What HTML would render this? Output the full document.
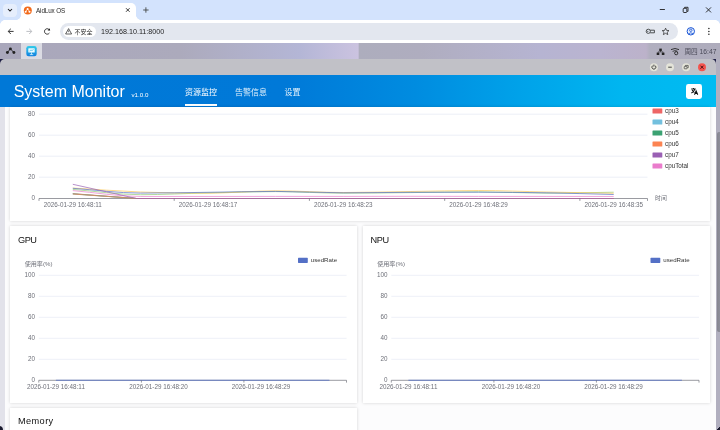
<!DOCTYPE html>
<html><head><meta charset="utf-8"><title>AidLux OS</title>
<style>
*{margin:0;padding:0;box-sizing:border-box}
html,body{width:720px;height:430px;overflow:hidden;background:#fff;font-family:"Liberation Sans","Noto Sans CJK SC",sans-serif;}
#root{will-change:transform;position:relative;width:720px;height:430px;overflow:hidden;background:#fcfcfd}
.abs{position:absolute}
#tabs{left:0;top:0;width:720px;height:20px;background:#d3e3fd}
#tab{left:20.6px;top:2.8px;width:115.4px;height:17.2px;background:#fff;border-radius:5px 5px 0 0}
#toolbar{left:0;top:20px;width:720px;height:23px;background:#fff}
#url{left:60.4px;top:22.8px;width:618px;height:16.8px;border-radius:8.4px;background:#e3e7ef}
#chip{left:62.5px;top:25.6px;width:33.3px;height:11.8px;border-radius:6px;background:#fff}
#task{left:0;top:43px;width:720px;height:16.3px;background:linear-gradient(90deg,#a9a7bb 0px,#acaabc 180px,#b4b6d6 300px,#cbc3e0 358px,#adadbd 359.5px,#afadbf 420px,#b6b4d2 540px,#bab4d0 600px,#bcb2ca 646px,#b1afbf 650px,#aeacbc 720px)}
#wintitle{left:0;top:59px;width:716px;height:16px;background:#c1c1c7;border-radius:5px 5px 0 0}
#hdr{left:0;top:75px;width:716px;height:32px;background:linear-gradient(90deg,#0078d7 0%,#0079d8 40%,#008ce0 58%,#00a4ea 74%,#00b6f0 87%,#00bcf2 100%)}
.card{background:#fff;box-shadow:0 0 3px rgba(0,0,0,.17)}
.t{position:absolute;white-space:nowrap;line-height:1}
svg text.ax{font-family:"Liberation Sans","Noto Sans CJK SC",sans-serif;font-size:6.3px;fill:#6e7079}
svg text.lg{font-family:"Liberation Sans","Noto Sans CJK SC",sans-serif;font-size:6.3px;fill:#333}
</style></head><body><div id="root">

<!-- browser chrome -->
<div id="tabs" class="abs"></div>
<div class="abs" style="left:3px;top:3.5px;width:13.7px;height:13.2px;border-radius:4px;background:#e6eefc"></div>
<div id="tab" class="abs"></div>
<div class="abs" style="left:15.6px;top:15px;width:5px;height:5px;background:radial-gradient(circle at 0 0,#d3e3fd 4.6px,#fff 5.2px)"></div>
<div class="abs" style="left:136px;top:15px;width:5px;height:5px;background:radial-gradient(circle at 100% 0,#d3e3fd 4.6px,#fff 5.2px)"></div>
<div class="t" style="left:36px;top:7.7px;font-size:6.3px;letter-spacing:-0.1px;color:#1f1f1f">AidLux OS</div>
<div id="toolbar" class="abs"></div>
<div class="abs" style="left:0;top:20px;width:5px;height:5px;background:radial-gradient(circle at 100% 100%,#fff 4.6px,#d3e3fd 5.2px)"></div>
<div class="abs" style="left:715px;top:20px;width:5px;height:5px;background:radial-gradient(circle at 0 100%,#fff 4.6px,#d3e3fd 5.2px)"></div>
<div id="url" class="abs"></div>
<div id="chip" class="abs"></div>
<div class="t" style="left:74.6px;top:28.9px;font-size:6px;color:#1f1f1f">不安全</div>
<div class="t" style="left:101px;top:28.5px;font-size:7.18px;color:#1f1f1f">192.168.10.11:8000</div>

<svg class="abs" style="left:0;top:0" width="720" height="60" viewBox="0 0 720 60">
 <!-- tab search chevron -->
 <path d="M8 9 L10 11 L12 9" fill="none" stroke="#1f1f1f" stroke-width="1.05"/>
 <!-- favicon -->
 <circle cx="27.8" cy="10.4" r="4" fill="#f26a1b"/>
 <circle cx="27.6" cy="8.9" r="1" fill="#fff"/><circle cx="25.7" cy="11.7" r="1" fill="#fff"/><circle cx="29.5" cy="11.7" r="1" fill="#fff"/>
 <path d="M27.6 8.9 L25.7 11.7 M27.6 8.9 L29.5 11.7" stroke="#fff" stroke-width="0.6"/>
 <!-- tab close -->
 <path d="M126 8.2 L129.6 11.8 M129.6 8.2 L126 11.8" stroke="#1f1f1f" stroke-width="0.85"/>
 <!-- plus -->
 <path d="M143.2 10 H148.6 M145.9 7.3 V12.7" stroke="#444746" stroke-width="0.9"/>
 <!-- window controls -->
 <path d="M659.8 9.5 H664.9" stroke="#1f1f1f" stroke-width="0.9"/>
 <rect x="683.2" y="8.3" width="3.6" height="4.2" rx="0.8" fill="none" stroke="#1f1f1f" stroke-width="0.9"/>
 <path d="M684.6 8 V7.3 H688 V11.4 H687.2" fill="none" stroke="#1f1f1f" stroke-width="0.9"/>
 <path d="M706 7.4 L711 12.4 M711 7.4 L706 12.4" stroke="#1f1f1f" stroke-width="0.9"/>
 <!-- nav arrows -->
 <path d="M13.6 31.4 H8.4 M10.8 28.8 L8.2 31.4 L10.8 34" fill="none" stroke="#1f1f1f" stroke-width="0.9"/>
 <path d="M26.4 31.4 H31.6 M29.2 28.8 L31.8 31.4 L29.2 34" fill="none" stroke="#b4b7bb" stroke-width="0.9"/>
 <path d="M49.6 30.2 A2.7 2.7 0 1 0 49.4 33" fill="none" stroke="#1f1f1f" stroke-width="0.9"/>
 <path d="M50 28.2 V30.6 H47.6 Z" fill="#1f1f1f"/>
 <!-- warning -->
 <path d="M68.6 28.6 L71.6 34 H65.6 Z" fill="none" stroke="#1f1f1f" stroke-width="0.7" stroke-linejoin="round"/>
 <path d="M68.6 30.4 V32.2" stroke="#1f1f1f" stroke-width="0.6"/>
 <!-- key -->
 <circle cx="648.3" cy="31.3" r="2.1" fill="none" stroke="#3c3f41" stroke-width="0.9"/>
 <circle cx="647.8" cy="31.3" r="0.6" fill="#3c3f41"/>
 <path d="M650.2 30.2 H654.4 V32.8 H650.2" fill="none" stroke="#3c3f41" stroke-width="0.9"/>
 <!-- star -->
 <path d="M665.6 28.2 L666.6 30.4 L669 30.6 L667.2 32.2 L667.8 34.6 L665.6 33.3 L663.4 34.6 L664 32.2 L662.2 30.6 L664.6 30.4 Z" fill="none" stroke="#1f1f1f" stroke-width="0.7" stroke-linejoin="round"/>
 <!-- profile -->
 <circle cx="690.8" cy="31.3" r="3.7" fill="#e8f0fe" stroke="#1a56d6" stroke-width="1"/>
 <circle cx="690.8" cy="30.3" r="1.2" fill="none" stroke="#1a56d6" stroke-width="0.8"/>
 <path d="M688.4 33.9 Q690.8 31.6 693.2 33.9" fill="none" stroke="#1a56d6" stroke-width="0.8"/>
 <!-- menu dots -->
 <circle cx="708.9" cy="28.6" r="0.75" fill="#1f1f1f"/><circle cx="708.9" cy="31.4" r="0.75" fill="#1f1f1f"/><circle cx="708.9" cy="34.2" r="0.75" fill="#1f1f1f"/>
</svg>

<!-- desktop taskbar -->
<div id="task" class="abs"></div>
<div class="abs" style="left:20.8px;top:43px;width:21.1px;height:16.2px;background:#dbdbe3"></div>
<svg class="abs" style="left:0;top:43px" width="720" height="17" viewBox="0 43 720 17">
 <circle cx="10.4" cy="48.9" r="1.45" fill="#222"/><circle cx="7.4" cy="52.5" r="1.45" fill="#222"/><circle cx="13.9" cy="52.5" r="1.45" fill="#222"/>
 <path d="M10.4 48.9 L7.4 52.5 M10.4 48.9 L13.9 52.5" stroke="#222" stroke-width="0.9"/>
 <defs><linearGradient id="ig" x1="0" y1="0" x2="0" y2="1"><stop offset="0" stop-color="#34cdea"/><stop offset="1" stop-color="#0f7fe0"/></linearGradient></defs>
 <rect x="26.3" y="45.9" width="10.4" height="10.4" rx="2.4" fill="url(#ig)"/>
 <rect x="28.3" y="48.2" width="6.4" height="4.2" rx="0.5" fill="#e8fbff"/>
 <path d="M29.6 51 L31 50 L32 50.6 L33.6 49.4" fill="none" stroke="#22a8e4" stroke-width="0.6"/>
 <path d="M29.8 54.6 H33.2 M31.5 52.4 V54.6" stroke="#e8fbff" stroke-width="0.7"/>
 <!-- network -->
 <rect x="659.3" y="48.6" width="2.5" height="2.4" fill="#222"/><rect x="656.7" y="52.6" width="2.6" height="2.4" fill="#222"/><rect x="661.8" y="52.6" width="2.6" height="2.4" fill="#222"/>
 <path d="M660.5 51 V52 M658 52.6 V51.9 H663.1 V52.6" fill="none" stroke="#222" stroke-width="0.6"/>
 <!-- wifi -->
 <path d="M671 49.6 Q675 47.4 679 49.6" fill="none" stroke="#222" stroke-width="0.9"/>
 <path d="M672.6 51.4 Q675 50 677.4 51.2" fill="none" stroke="#222" stroke-width="0.8"/>
 <circle cx="676.2" cy="53.2" r="1.6" fill="none" stroke="#222" stroke-width="0.9"/>
</svg>
<div class="t" style="left:684.4px;top:48.8px;font-size:6.7px;color:#4a4a58">周四 16:47</div>

<!-- window -->
<div class="abs" style="left:0;top:59px;width:6px;height:6px;background:#1a1a40"></div>
<div class="abs" style="left:711px;top:59px;width:9px;height:6px;background:#23234a"></div>
<div class="abs" style="left:716px;top:59px;width:4px;height:371px;background:#b1afbf"></div>
<div class="abs" style="left:716.6px;top:132px;width:3.4px;height:200px;background:linear-gradient(90deg,#85858f,#8e8e9a);border-radius:2px 0 0 2px"></div>
<div class="abs" style="left:716px;top:426px;width:4px;height:4px;background:linear-gradient(135deg,transparent 50%,#1c1c30 52%)"></div>
<div id="wintitle" class="abs"></div>
<svg class="abs" style="left:640px;top:59px" width="80" height="16" viewBox="640 59 80 16">
 <circle cx="653.9" cy="67.2" r="4" fill="#e4e4d9"/><circle cx="670" cy="67.2" r="4" fill="#e4e4d9"/><circle cx="686.1" cy="67.2" r="4" fill="#e4e4d9"/><circle cx="702" cy="67.2" r="4" fill="#f4544e"/>
 <path d="M655.3 65.7 A2 2 0 1 1 652.5 65.7" fill="none" stroke="#222" stroke-width="0.8"/>
 <path d="M653.9 64.6 V66.6" stroke="#222" stroke-width="0.8"/>
 <path d="M668.2 67.2 H671.8" stroke="#222" stroke-width="0.8"/>
 <rect x="684.2" y="66.4" width="2.8" height="2.4" rx="0.5" fill="none" stroke="#222" stroke-width="0.6"/>
 <path d="M685.4 66 V65.4 H688.2 V67.8 H687.4" fill="none" stroke="#222" stroke-width="0.6"/>
 <path d="M700.5 65.7 L703.5 68.7 M703.5 65.7 L700.5 68.7" stroke="#3a1010" stroke-width="0.9"/>
</svg>
<div id="hdr" class="abs"></div>
<div class="t" style="left:13.7px;top:83.6px;font-size:16px;color:#fff;letter-spacing:0">System Monitor</div>
<div class="t" style="left:131.5px;top:91.8px;font-size:6.2px;color:#fff">v1.0.0</div>
<div class="t" style="left:185px;top:88.8px;font-size:8px;color:#fff">资源监控</div>
<div class="t" style="left:235px;top:88.8px;font-size:8px;color:#e4f2fc">告警信息</div>
<div class="t" style="left:284.4px;top:88.8px;font-size:8px;color:#e4f2fc">设置</div>
<div class="abs" style="left:185px;top:104.2px;width:32px;height:1.8px;background:#fff"></div>
<div class="abs" style="left:686px;top:83.6px;width:15.8px;height:15.6px;border-radius:2.4px;background:#fff"></div>
<svg class="abs" style="left:686.7px;top:84px" width="14.6" height="14.6" viewBox="0 0 16 16">
 <path d="M4.6 5.4 H9.6 M7.1 4.4 V5.4 M8.8 5.4 Q8 8.4 4.8 9.8 M5.6 6.6 Q6.6 8.6 8.4 9.2" fill="none" stroke="#111" stroke-width="1.1"/>
 <path d="M8.2 11.8 L10 7.4 L11.8 11.8 M8.9 10.4 H11.1" fill="none" stroke="#111" stroke-width="1.1"/>
</svg>

<!-- content -->
<div class="abs" style="left:0;top:107px;width:4.5px;height:323px;background:#e2e2ea"></div>
<div class="abs" style="left:-1px;top:426.4px;width:4px;height:5px;background:#1c1c30;border-radius:0 4px 0 0"></div>
<div class="abs card" style="left:9.5px;top:107px;width:700.5px;height:114.3px"></div>
<div class="abs card" style="left:9.5px;top:225.7px;width:347.5px;height:177.3px"></div>
<div class="abs card" style="left:362.5px;top:225.7px;width:347.5px;height:177.3px"></div>
<div class="abs card" style="left:9.5px;top:407.6px;width:347.5px;height:40px"></div>
<div class="t" style="left:18px;top:235.6px;font-size:9.2px;letter-spacing:-0.45px;color:#111">GPU</div>
<div class="t" style="left:370.6px;top:235.6px;font-size:9.2px;letter-spacing:-0.45px;color:#111">NPU</div>
<div class="t" style="left:18px;top:417.3px;font-size:9.2px;letter-spacing:0.4px;color:#111">Memory</div>
<svg class="abs" style="left:0;top:0" width="720" height="430" viewBox="0 0 720 430">
<line x1="39.0" y1="114.2" x2="647.5" y2="114.2" stroke="#e0e6f1" stroke-width="0.6"/>
<line x1="39.0" y1="135.2" x2="647.5" y2="135.2" stroke="#e0e6f1" stroke-width="0.6"/>
<line x1="39.0" y1="156.2" x2="647.5" y2="156.2" stroke="#e0e6f1" stroke-width="0.6"/>
<line x1="39.0" y1="177.2" x2="647.5" y2="177.2" stroke="#e0e6f1" stroke-width="0.6"/>
<line x1="39.0" y1="198.5" x2="647.5" y2="198.5" stroke="#6e7079" stroke-width="0.7"/>
<path d="M72.8 189.40 C95.3 191.17 117.9 194.70 140.4 194.70 C163.0 194.70 185.5 193.42 208.0 192.90 C230.6 192.38 253.1 191.60 275.6 191.60 C298.2 191.60 320.7 193.20 343.2 193.20 C365.8 193.20 388.3 192.83 410.9 192.60 C433.4 192.37 455.9 191.80 478.5 191.80 C501.0 191.80 523.5 193.20 546.1 193.20 C568.6 193.20 591.2 192.53 613.7 192.20" fill="none" stroke="#91cc75" stroke-width="0.7" stroke-linejoin="round"/>
<path d="M72.8 188.00 C95.3 189.33 117.9 191.13 140.4 192.00 C163.0 192.87 185.5 193.20 208.0 193.20 C230.6 193.20 253.1 190.80 275.6 190.80 C298.2 190.80 320.7 192.50 343.2 192.50 C365.8 192.50 388.3 191.83 410.9 191.50 C433.4 191.17 455.9 190.50 478.5 190.50 C501.0 190.50 523.5 191.53 546.1 192.00 C568.6 192.47 591.2 192.87 613.7 193.30" fill="none" stroke="#fac858" stroke-width="0.7" stroke-linejoin="round"/>
<path d="M72.8 188.30 C95.3 189.90 117.9 193.10 140.4 193.10 C163.0 193.10 185.5 192.58 208.0 192.30 C230.6 192.02 253.1 191.40 275.6 191.40 C298.2 191.40 320.7 192.80 343.2 192.80 C365.8 192.80 388.3 192.40 410.9 192.30 C433.4 192.20 455.9 192.20 478.5 192.20 C501.0 192.20 523.5 192.42 546.1 192.80 C568.6 193.18 591.2 193.93 613.7 194.50" fill="none" stroke="#5470c6" stroke-width="0.7" stroke-linejoin="round"/>
<path d="M72.8 193.6 L136.6 198.5 L613.7 198.5" fill="none" stroke="#ee6666" stroke-width="0.7" stroke-linejoin="round"/>
<path d="M72.8 194.0 L136.6 198.5 L613.7 198.5" fill="none" stroke="#73c0de" stroke-width="0.7" stroke-linejoin="round"/>
<path d="M72.8 193.8 L136.6 198.5 L613.7 198.5" fill="none" stroke="#3ba272" stroke-width="0.7" stroke-linejoin="round"/>
<path d="M72.8 194.0 L136.6 198.5 L613.7 198.5" fill="none" stroke="#fc8452" stroke-width="0.7" stroke-linejoin="round"/>
<path d="M72.8 190.60 C95.3 192.55 117.9 196.45 140.4 196.45 C163.0 196.45 185.5 196.45 208.0 196.45 C230.6 196.45 253.1 196.40 275.6 196.40 C298.2 196.40 320.7 196.40 343.2 196.40 C365.8 196.40 388.3 196.30 410.9 196.30 C433.4 196.30 455.9 196.40 478.5 196.40 C501.0 196.40 523.5 196.40 546.1 196.40 C568.6 196.40 591.2 196.43 613.7 196.45" fill="none" stroke="#ea7ccc" stroke-width="0.7" stroke-linejoin="round"/>
<path d="M72.8 184.3 L136.6 198.5 L613.7 198.5" fill="none" stroke="#9a60b4" stroke-width="0.7" stroke-linejoin="round"/>
<line x1="39.0" y1="198.5" x2="39.0" y2="200.9" stroke="#6e7079" stroke-width="0.7"/>
<line x1="174.2" y1="198.5" x2="174.2" y2="200.9" stroke="#6e7079" stroke-width="0.7"/>
<line x1="309.4" y1="198.5" x2="309.4" y2="200.9" stroke="#6e7079" stroke-width="0.7"/>
<line x1="444.7" y1="198.5" x2="444.7" y2="200.9" stroke="#6e7079" stroke-width="0.7"/>
<line x1="579.9" y1="198.5" x2="579.9" y2="200.9" stroke="#6e7079" stroke-width="0.7"/>
<line x1="647.5" y1="198.5" x2="647.5" y2="200.9" stroke="#6e7079" stroke-width="0.7"/>
<text x="35" y="115.7" text-anchor="end" class="ax">80</text>
<text x="35" y="136.7" text-anchor="end" class="ax">60</text>
<text x="35" y="157.7" text-anchor="end" class="ax">40</text>
<text x="35" y="178.7" text-anchor="end" class="ax">20</text>
<text x="35" y="199.7" text-anchor="end" class="ax">0</text>
<text x="72.8" y="207" text-anchor="middle" class="ax">2026-01-29 16:48:11</text>
<text x="208.0" y="207" text-anchor="middle" class="ax">2026-01-29 16:48:17</text>
<text x="343.2" y="207" text-anchor="middle" class="ax">2026-01-29 16:48:23</text>
<text x="478.5" y="207" text-anchor="middle" class="ax">2026-01-29 16:48:29</text>
<text x="613.7" y="207" text-anchor="middle" class="ax">2026-01-29 16:48:35</text>
<text x="655" y="200.3" class="ax" style="font-size:5.9px">时间</text>
<rect x="652.5" y="108.4" width="9.8" height="5.1" rx="0.6" fill="#ee6666"/>
<text x="665" y="113.1" class="lg">cpu3</text>
<rect x="652.5" y="119.4" width="9.8" height="5.1" rx="0.6" fill="#73c0de"/>
<text x="665" y="124.1" class="lg">cpu4</text>
<rect x="652.5" y="130.4" width="9.8" height="5.1" rx="0.6" fill="#3ba272"/>
<text x="665" y="135.1" class="lg">cpu5</text>
<rect x="652.5" y="141.4" width="9.8" height="5.1" rx="0.6" fill="#fc8452"/>
<text x="665" y="146.1" class="lg">cpu6</text>
<rect x="652.5" y="152.4" width="9.8" height="5.1" rx="0.6" fill="#9a60b4"/>
<text x="665" y="157.1" class="lg">cpu7</text>
<rect x="652.5" y="163.4" width="9.8" height="5.1" rx="0.6" fill="#ea7ccc"/>
<text x="665" y="168.1" class="lg">cpuTotal</text>
<line x1="38.8" y1="275.3" x2="346.5" y2="275.3" stroke="#e0e6f1" stroke-width="0.6"/>
<line x1="38.8" y1="296.3" x2="346.5" y2="296.3" stroke="#e0e6f1" stroke-width="0.6"/>
<line x1="38.8" y1="317.3" x2="346.5" y2="317.3" stroke="#e0e6f1" stroke-width="0.6"/>
<line x1="38.8" y1="338.3" x2="346.5" y2="338.3" stroke="#e0e6f1" stroke-width="0.6"/>
<line x1="38.8" y1="359.3" x2="346.5" y2="359.3" stroke="#e0e6f1" stroke-width="0.6"/>
<line x1="38.8" y1="380.3" x2="346.5" y2="380.3" stroke="#6e7079" stroke-width="0.7"/>
<line x1="55.9" y1="380.25" x2="329.4" y2="380.25" stroke="#5470c6" stroke-width="0.8"/>
<line x1="38.8" y1="380.3" x2="38.8" y2="382.6" stroke="#6e7079" stroke-width="0.7"/>
<line x1="141.4" y1="380.3" x2="141.4" y2="382.6" stroke="#6e7079" stroke-width="0.7"/>
<line x1="243.9" y1="380.3" x2="243.9" y2="382.6" stroke="#6e7079" stroke-width="0.7"/>
<line x1="346.5" y1="380.3" x2="346.5" y2="382.6" stroke="#6e7079" stroke-width="0.7"/>
<text x="35" y="276.5" text-anchor="end" class="ax">100</text>
<text x="35" y="297.5" text-anchor="end" class="ax">80</text>
<text x="35" y="318.5" text-anchor="end" class="ax">60</text>
<text x="35" y="339.5" text-anchor="end" class="ax">40</text>
<text x="35" y="360.5" text-anchor="end" class="ax">20</text>
<text x="35" y="381.5" text-anchor="end" class="ax">0</text>
<text x="55.9" y="388.6" text-anchor="middle" class="ax">2026-01-29 16:48:11</text>
<text x="158.5" y="388.6" text-anchor="middle" class="ax">2026-01-29 16:48:20</text>
<text x="261.0" y="388.6" text-anchor="middle" class="ax">2026-01-29 16:48:29</text>
<text x="24.7" y="266.2" class="ax" style="font-size:6.1px">使用率(%)</text>
<rect x="298" y="257.8" width="9.8" height="5.1" rx="0.6" fill="#5470c6"/>
<text x="310.8" y="262.4" class="lg" style="font-size:6.15px">usedRate</text>
<line x1="391.3" y1="275.3" x2="699.0" y2="275.3" stroke="#e0e6f1" stroke-width="0.6"/>
<line x1="391.3" y1="296.3" x2="699.0" y2="296.3" stroke="#e0e6f1" stroke-width="0.6"/>
<line x1="391.3" y1="317.3" x2="699.0" y2="317.3" stroke="#e0e6f1" stroke-width="0.6"/>
<line x1="391.3" y1="338.3" x2="699.0" y2="338.3" stroke="#e0e6f1" stroke-width="0.6"/>
<line x1="391.3" y1="359.3" x2="699.0" y2="359.3" stroke="#e0e6f1" stroke-width="0.6"/>
<line x1="391.3" y1="380.3" x2="699.0" y2="380.3" stroke="#6e7079" stroke-width="0.7"/>
<line x1="408.4" y1="380.25" x2="681.9" y2="380.25" stroke="#5470c6" stroke-width="0.8"/>
<line x1="391.3" y1="380.3" x2="391.3" y2="382.6" stroke="#6e7079" stroke-width="0.7"/>
<line x1="493.9" y1="380.3" x2="493.9" y2="382.6" stroke="#6e7079" stroke-width="0.7"/>
<line x1="596.4" y1="380.3" x2="596.4" y2="382.6" stroke="#6e7079" stroke-width="0.7"/>
<line x1="699.0" y1="380.3" x2="699.0" y2="382.6" stroke="#6e7079" stroke-width="0.7"/>
<text x="387.5" y="276.5" text-anchor="end" class="ax">100</text>
<text x="387.5" y="297.5" text-anchor="end" class="ax">80</text>
<text x="387.5" y="318.5" text-anchor="end" class="ax">60</text>
<text x="387.5" y="339.5" text-anchor="end" class="ax">40</text>
<text x="387.5" y="360.5" text-anchor="end" class="ax">20</text>
<text x="387.5" y="381.5" text-anchor="end" class="ax">0</text>
<text x="408.4" y="388.6" text-anchor="middle" class="ax">2026-01-29 16:48:11</text>
<text x="511.0" y="388.6" text-anchor="middle" class="ax">2026-01-29 16:48:20</text>
<text x="613.5" y="388.6" text-anchor="middle" class="ax">2026-01-29 16:48:29</text>
<text x="377.2" y="266.2" class="ax" style="font-size:6.1px">使用率(%)</text>
<rect x="650.5" y="257.8" width="9.8" height="5.1" rx="0.6" fill="#5470c6"/>
<text x="663.3" y="262.4" class="lg" style="font-size:6.15px">usedRate</text>
</svg>
</div></body></html>
